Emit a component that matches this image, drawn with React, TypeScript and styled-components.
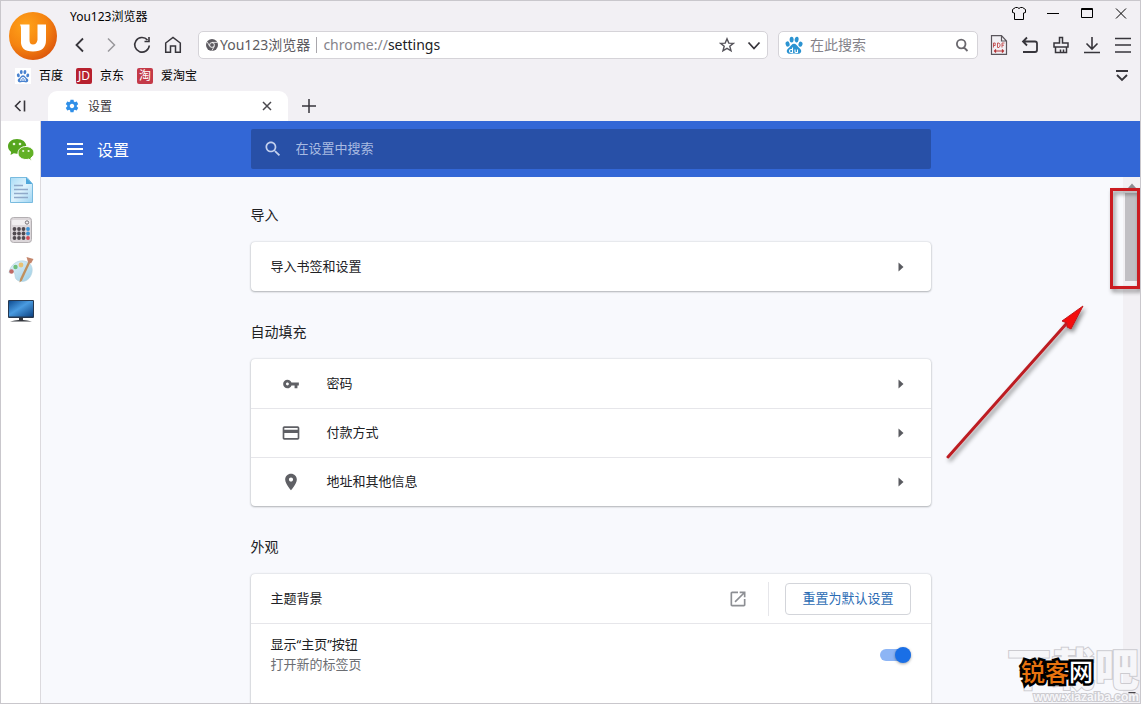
import React from "react";
import styled, { createGlobalStyle } from "styled-components";

const GlobalStyle = createGlobalStyle`
  *, *::before, *::after { box-sizing: border-box; }
  body {
    margin: 0;
    font-family: "Noto Sans", "Noto Sans CJK SC", sans-serif;
    font-size: 13px;
    color: #202124;
  }
  button, input { font: inherit; color: inherit; margin: 0; }
  svg { display: block; flex: none; }
`;

/* ---------- window ---------- */

const Window = styled.div`
  display: flex;
  flex-direction: column;
  height: 100vh;
  border: 1px solid #c9c7cc;
  background: #f2f0f4;
  overflow: hidden;
`;

const IconButton = styled.button<{ $w?: number; $h?: number }>`
  display: flex;
  align-items: center;
  justify-content: center;
  flex: none;
  width: ${(p) => p.$w ?? 24}px;
  height: ${(p) => p.$h ?? 24}px;
  padding: 0;
  border: 0;
  background: none;
  color: #37353b;
`;

const Top = styled.header`
  display: flex;
`;

const Logo = styled.div`
  flex: none;
  padding: 11px 11px 0 8px;
  height: 58px;
`;

const TopColumn = styled.div`
  flex: 1;
  min-width: 0;
`;

const TitleRow = styled.div`
  display: flex;
  height: 30px;
  padding: 0 2px;
`;

const WindowTitle = styled.span`
  flex: 1;
  padding-top: 6px;
  font-size: 12px;
  line-height: 20px;
  color: #000;
`;

const WindowButtons = styled.div`
  display: flex;
`;

const NavRow = styled.div`
  display: flex;
  align-items: center;
  height: 28px;
  padding-right: 5px;
`;

const ButtonGroup = styled.div`
  display: flex;
  gap: 7px;
`;

const Field = styled.div`
  display: flex;
  align-items: center;
  height: 28px;
  border: 1px solid #d5d3d8;
  border-radius: 5px;
  background: #fff;
  font-size: 14px;
  line-height: 20px;
`;

const AddressBar = styled(Field)`
  flex: 1;
  min-width: 0;
  margin: 0 10px 0 13px;
  padding: 0 0 0 7px;
`;

const SearchBar = styled(Field)`
  flex: none;
  width: 200px;
  margin-right: 9px;
  padding: 0 3px 0 6px;
`;

const Identity = styled.span`
  display: flex;
  align-items: center;
  gap: 2px;
  color: #5d5b61;
  white-space: nowrap;
  &::after {
    content: "";
    width: 1px;
    height: 16px;
    margin: 0 6px 0 4px;
    background: #a9a7ac;
  }
`;

const Scheme = styled.label`
  color: #85838a;
`;

const BareInput = styled.input`
  flex: 1;
  min-width: 0;
  padding: 0;
  border: 0;
  outline: 0;
  background: none;
  &::placeholder { color: #85838a; opacity: 1; }
`;

const PaddedInput = styled(BareInput)`
  padding-left: 7px;
`;

const Bookmarks = styled.nav`
  display: flex;
  align-items: center;
  gap: 13px;
  height: 32px;
  padding: 1px 6px 0 14px;
`;

const Bookmark = styled.a`
  display: flex;
  align-items: center;
  gap: 8px;
  font-size: 12px;
  line-height: 20px;
  color: #000;
  text-decoration: none;
`;

const SiteBadge = styled.span<{ $bg: string }>`
  width: 16px;
  height: 16px;
  border-radius: 2px;
  background: ${(p) => p.$bg};
  color: #fff;
  font-size: 12px;
  line-height: 16px;
  text-align: center;
`;

const Spacer = styled.span`
  flex: 1;
`;

const TabStrip = styled.div`
  display: flex;
  align-items: center;
  height: 30px;
  padding-left: 7px;
`;

const Tab = styled.div`
  display: flex;
  align-items: center;
  width: 240px;
  height: 30px;
  margin: 0 9px 0 16px;
  padding: 0 9px 0 17px;
  border-radius: 9px 9px 0 0;
  background: #fff;
  font-size: 12px;
  color: #37353b;
`;

const TabTitle = styled.span`
  flex: 1;
  padding-left: 9px;
`;

/* ---------- page ---------- */

const Body = styled.div`
  display: flex;
  flex: 1;
  min-height: 0;
`;

const SideBar = styled.aside`
  display: flex;
  flex-direction: column;
  align-items: center;
  gap: 12px;
  flex: none;
  width: 40px;
  padding-top: 15px;
  border-right: 1px solid #dcdade;
  background: #fff;
`;

const Page = styled.div`
  position: relative;
  display: flex;
  flex-direction: column;
  flex: 1;
  min-width: 0;
  background: #f8f9fd;
`;

const Toolbar = styled.div`
  display: grid;
  grid-template-columns: 1fr minmax(0, 680px) 1fr;
  align-items: center;
  flex: none;
  height: 56px;
  background: #3367d6;
  color: #fff;
`;

const Brand = styled.div`
  display: flex;
  align-items: center;
  gap: 10px;
  padding: 2px 0 0 22px;
`;

const BrandTitle = styled.h1`
  margin: 0;
  font-size: 16px;
  font-weight: 400;
  line-height: 24px;
`;

const SettingsSearch = styled.label`
  display: flex;
  align-items: center;
  gap: 13px;
  height: 40px;
  padding: 0 12px;
  border-radius: 2px;
  background: #2850a7;
  color: #c3d0ee;
`;

const SettingsInput = styled(BareInput)`
  padding-bottom: 2px;
  &::placeholder { color: #a9bbe2; }
`;

const Scroller = styled.div`
  display: flex;
  flex: 1;
  min-height: 0;
`;

const Content = styled.main`
  display: flex;
  flex-direction: column;
  align-items: center;
  gap: 32px;
  flex: 1;
  min-width: 0;
  padding: 29px 0 0 17px;
  overflow: hidden;
`;

const ScrollTrack = styled.div`
  display: flex;
  flex-direction: column;
  align-items: center;
  justify-content: space-between;
  flex: none;
  width: 17px;
  padding: 6px 0;
  background: #f2f0f4;
`;

const ScrollThumb = styled.div`
  flex: none;
  width: 13px;
  height: 88px;
  margin: 5px 0 auto;
  background: #c1bfc4;
`;

const Section = styled.section`
  flex: none;
  width: 100%;
  max-width: 680px;
`;

const SectionTitle = styled.h2`
  margin: 0 0 18px;
  font-size: 14px;
  font-weight: 400;
  line-height: 18px;
`;

const Card = styled.div`
  border-radius: 4px;
  background: #fff;
  box-shadow: 0 1px 2px rgba(60, 64, 67, 0.32), 0 0 2px rgba(60, 64, 67, 0.25);
`;

const Row = styled.div`
  display: flex;
  align-items: center;
  height: 49px;
  padding: 0 20px;
  line-height: 20px;
  & + & { border-top: 1px solid #e6e6ea; }
`;

const ToggleRow = styled(Row)`
  align-items: flex-start;
  height: 112px;
  padding-top: 10px;
`;

const LinkRow = styled(Row).attrs({ as: "a", href: "#" })`
  color: inherit;
  text-decoration: none;
`;

const RowIcon = styled.span`
  display: flex;
  justify-content: center;
  width: 40px;
  margin-right: 16px;
  color: #5f6065;
`;

const RowText = styled.label`
  flex: 1;
  padding-bottom: 2px;
`;

const SubText = styled.span`
  display: block;
  color: #6b6d72;
`;

const Arrow = styled.span`
  display: flex;
  justify-content: center;
  width: 20px;
  color: #5a5b60;
`;

const Divider = styled.span`
  width: 1px;
  height: 34px;
  margin: 0 16px 0 18px;
  background: #e6e6ea;
`;

const OutlineButton = styled.button`
  height: 32px;
  padding: 0 16px 2px;
  border: 1px solid #d3d5da;
  border-radius: 4px;
  background: #fff;
  color: #2b6cb4;
  line-height: 20px;
  white-space: nowrap;
`;

const Toggle = styled.input`
  appearance: none;
  display: flex;
  align-items: center;
  justify-content: flex-end;
  width: 31px;
  height: 12px;
  margin: 15px 0 0;
  border-radius: 6px;
  background: #8db5f5;
  &::after {
    content: "";
    width: 16px;
    height: 16px;
    border-radius: 50%;
    background: #1a6fe6;
    box-shadow: 0 1px 3px rgba(0, 0, 0, 0.35);
  }
`;

const Muted = styled.span`
  color: #8d8f94;
`;

const Blue = styled.span`
  color: #2f8fe8;
`;

/* ---------- overlays ---------- */

const Annotation = styled.svg`
  position: absolute;
  top: 56px;
  right: 0;
  overflow: visible;
  pointer-events: none;
`;

const Watermark = styled.div`
  position: absolute;
  right: 1px;
  bottom: 0;
  text-align: right;
  white-space: nowrap;
  pointer-events: none;
  font-weight: 900;
  color: #f6f6f9;
  -webkit-text-stroke: 2px #cccbd0;
  paint-order: stroke fill;
`;

const WatermarkName = styled.div`
  font-size: 44px;
  line-height: 44px;
`;

const WatermarkUrl = styled.div`
  font-family: "Liberation Sans", sans-serif;
  font-size: 12px;
  line-height: 12px;
`;

const Stamp = styled.div`
  position: absolute;
  right: 47px;
  bottom: 17px;
  font-size: 24px;
  font-weight: 500;
  line-height: 28px;
  color: #e8730f;
  -webkit-text-stroke: 5px #000;
  paint-order: stroke fill;
  pointer-events: none;
`;

const StampTail = styled.span`
  color: #fff;
`;

/* ---------- drawings ---------- */

type LineProps = { d: string; size?: number; w?: number; color?: string };
const Line = ({ d, size = 20, w = 1.8, color = "currentColor" }: LineProps) => (
  <svg width={size} height={size} viewBox={`0 0 ${size} ${size}`} fill="none" stroke={color} strokeWidth={w}>
    <path d={d} />
  </svg>
);

const Solid = ({ d, size = 20, box = "0 0 24 24" }: { d: string; size?: number; box?: string }) => (
  <svg width={size} height={size} viewBox={box} fill="currentColor">
    <path d={d} />
  </svg>
);

const ChevronRight = () => (
  <Arrow>
    <svg width="6" height="10" viewBox="0 0 6 10" fill="currentColor">
      <path d="M0.500 0.500 5.500 5 0.500 9.500z" />
    </svg>
  </Arrow>
);

const BrowserLogo = () => (
  <svg width="48" height="48" viewBox="0 0 48 48">
    <defs>
      <radialGradient id="logo" cx="0.35" cy="0.3" r="0.8">
        <stop offset="0" stopColor="#ffa31a" />
        <stop offset="0.55" stopColor="#f58410" />
        <stop offset="1" stopColor="#d9500c" />
      </radialGradient>
    </defs>
    <circle cx="24" cy="24" r="24" fill="url(#logo)" />
    <path d="M11 12.500H20.500V28Q20.500 32.500 24 32.500T28.500 28V12.500H37V28Q37 39.500 24 39.500T12 28V16Q12 14 11 12.500Z" fill="#fff" />
  </svg>
);

const PAW_TOES = (
  <>
    <ellipse cx="2.600" cy="8" rx="2" ry="2.700" transform="rotate(-15 2.600 8)" />
    <ellipse cx="6.600" cy="3.600" rx="2" ry="2.900" />
    <ellipse cx="11.600" cy="3.600" rx="2" ry="2.900" transform="rotate(10 11.600 3.600)" />
    <ellipse cx="15.500" cy="8.200" rx="2" ry="2.600" transform="rotate(15 15.500 8.200)" />
  </>
);
const PAW_PAD =
  "M9 7.800c2.200 0 3 2 4.500 3.500 1.500 1.400 3 2.200 2.700 4.200-.4 2.300-2.700 2.500-4.200 2.200-2-.4-4-.4-6 0-1.700.3-3.900 0-4.200-2.200-.3-2 1.200-2.800 2.700-4.200C6 9.800 6.800 7.800 9 7.800z";

const SearchPaw = () => (
  <svg width="18" height="18" viewBox="0 0 18 18" fill="#2b93d1">
    {PAW_TOES}
    <path d={PAW_PAD} />
    <path d="M7.500 11.500v5H6a1.500 1.500 0 0 1 0-3h1.500M10 13.500v2q0 1 1 1h1.500v-3" fill="none" stroke="#fff" strokeWidth="1.100" />
  </svg>
);

const BookmarkPaw = () => (
  <svg width="16" height="16" viewBox="-2 -2 22 22" fill="#4a83d0">
    <path d="M-2-2H20V20H-2z" fill="#fff" />
    {PAW_TOES}
    <path d={PAW_PAD} />
    <path d="M6 16V14Q6 12 9 11 12 12 12 14V16M9 13V16" fill="none" stroke="#fff" strokeWidth="1.500" />
  </svg>
);

const ChromeMark = () => (
  <svg width="12" height="12" viewBox="0 0 12 12">
    <circle cx="6" cy="6" r="6" fill="#5d5b61" />
    <circle cx="6" cy="6" r="2.400" fill="#5d5b61" stroke="#fff" strokeWidth="0.900" />
    <path d="M6 3.400H11.300M3.700 7.300 1.300 3M8.300 7.300 5.800 11.800" stroke="#fff" strokeWidth="0.800" />
  </svg>
);

const PdfIcon = () => (
  <svg width="18" height="20" viewBox="0 0 18 20" fill="none">
    <path d="M1.500 0.700H11.500L16.500 6V19.300H1.500Z M11.500 1V6H16.500" stroke="#5a555b" strokeWidth="1.200" />
    <path d="M3.500 12.500V8H5.200V10.500H3.500M7.500 8H9L10 9.500V11L9 12.500H7.500ZM12 12.500V8H14.500M12 10.200H14" stroke="#c1484a" strokeWidth="0.900" />
    <path d="M4.500 16H13.500M6 14.500 4.500 16 6 17.500M12 14.500 13.500 16 12 17.500" stroke="#b33336" strokeWidth="1.200" />
  </svg>
);

const SEARCH =
  "M15.500 14h-.79l-.28-.27C15.410 12.590 16 11.110 16 9.500 16 5.910 13.090 3 9.500 3S3 5.910 3 9.500 5.910 16 9.500 16c1.610 0 3.090-.59 4.230-1.570l.27.28v.79l5 4.990L20.490 19l-4.990-5zm-6 0C7.010 14 5 11.990 5 9.500S7.010 5 9.500 5 14 7.010 14 9.500 11.990 14 9.500 14z";
const KEY =
  "M12.650 10C11.830 7.670 9.610 6 7 6c-3.310 0-6 2.690-6 6s2.690 6 6 6c2.610 0 4.830-1.670 5.650-4H17v4h4v-4h2v-4H12.650zM7 14c-1.100 0-2-.9-2-2s.9-2 2-2 2 .9 2 2-.9 2-2 2z";
const CARD =
  "M20 4H4c-1.110 0-1.990.89-1.990 2L2 18c0 1.110.89 2 2 2h16c1.110 0 2-.89 2-2V6c0-1.110-.89-2-2-2zm0 14H4v-6h16v6zm0-10H4V6h16v2z";
const PIN =
  "M12 2C8.130 2 5 5.130 5 9c0 5.250 7 13 7 13s7-7.750 7-13c0-3.870-3.130-7-7-7zm0 9.500c-1.380 0-2.500-1.120-2.500-2.500s1.120-2.500 2.500-2.500 2.500 1.120 2.500 2.500-1.120 2.500-2.500 2.500z";
const LAUNCH =
  "M19 19H5V5h7V3H5c-1.110 0-2 .9-2 2v14c0 1.100.89 2 2 2h14c1.100 0 2-.9 2-2v-7h-2v7zM14 3v2h3.590l-9.830 9.830 1.410 1.410L19 6.410V10h2V3h-7z";
const GEAR =
  "M19.430 12.980c.04-.32.07-.64.07-.98s-.03-.66-.07-.98l2.110-1.650c.19-.15.24-.42.12-.64l-2-3.460c-.12-.22-.39-.3-.61-.22l-2.490 1c-.52-.4-1.080-.73-1.690-.98l-.38-2.650C14.460 2.180 14.250 2 14 2h-4c-.25 0-.46.18-.49.42l-.38 2.650c-.61.25-1.170.59-1.690.98l-2.490-1c-.23-.09-.49 0-.61.22l-2 3.460c-.13.22-.07.49.12.64l2.110 1.650c-.04.32-.07.65-.07.98s.03.66.07.98l-2.110 1.650c-.19.15-.24.42-.12.64l2 3.460c.12.22.39.3.61.22l2.490-1c.52.4 1.080.73 1.690.98l.38 2.650c.03.24.24.42.49.42h4c.25 0 .46-.18.49-.42l.38-2.650c.61-.25 1.170-.59 1.690-.98l2.490 1c.23.09.49 0 .61-.22l2-3.460c.12-.22.07-.49-.12-.64l-2.110-1.650zM12 15.500c-1.930 0-3.500-1.570-3.500-3.500s1.570-3.500 3.500-3.500 3.500 1.570 3.500 3.500-1.570 3.500-3.500 3.500z";

const WeChat = () => (
  <svg width="28" height="28" viewBox="0 0 28 28">
    <path d="M10 3C4.500 3 1 6.300 1 10.300c0 2.400 1.200 4.300 3.200 5.700L3.500 19l3.300-1.700c1 .3 2 .5 3.200.5 5.300 0 9.300-3.300 9.300-7.500S15.300 3 10 3z" fill="#55a61e" />
    <path d="M19 10.500c-4.600 0-8 2.900-8 6.500s3.400 6.500 8 6.500c.9 0 1.800-.1 2.600-.4l2.900 1.600-.7-2.600c2-1.300 3.200-3 3.200-5.100 0-3.600-3.500-6.500-8-6.500z" fill="#62b126" stroke="#fff" strokeWidth="1" />
    <circle cx="7" cy="8" r="1.300" fill="#e9f7dc" />
    <circle cx="13" cy="8" r="1.300" fill="#e9f7dc" />
    <circle cx="16.200" cy="15" r="1.100" fill="#e9f7dc" />
    <circle cx="21.600" cy="15" r="1.100" fill="#e9f7dc" />
  </svg>
);

const Notes = () => (
  <svg width="28" height="28" viewBox="0 0 28 28">
    <defs>
      <linearGradient id="paper" x1="0" y1="0" x2="1" y2="1">
        <stop offset="0" stopColor="#a9dcf6" />
        <stop offset="0.5" stopColor="#dff3fd" />
        <stop offset="1" stopColor="#9fd4f2" />
      </linearGradient>
    </defs>
    <path d="M3.500 1.500H20L25.500 8V26.500H3.500Z" fill="url(#paper)" stroke="#79bbdf" />
    <path d="M19 1.500 25.500 8H19Z" fill="#4ea8dc" />
    <path d="M7 9.500H16M7 13.500H21M7 17.500H21M7 21.500H21" stroke="#8fa9c9" strokeWidth="1.300" />
  </svg>
);

const Calculator = () => (
  <svg width="28" height="28" viewBox="0 0 28 28">
    <rect x="3.500" y="1.500" width="21" height="25" rx="3" fill="#dcd7da" stroke="#b3afb2" />
    <rect x="5" y="4" width="18" height="5" rx="1" fill="#f1eff0" />
    <circle cx="20" cy="6.500" r="1.700" fill="none" stroke="#6a666b" strokeWidth="0.900" />
    {[13, 17.5, 22].map((y) =>
      [7.5, 12, 16.5, 21].map((x) => (
        <circle key={`${x}-${y}`} cx={x} cy={y} r="1.900" fill={x === 21 ? (y === 22 ? "#d24a55" : "#3d95d6") : "#514b50"} />
      ))
    )}
  </svg>
);

const Palette = () => (
  <svg width="28" height="28" viewBox="0 0 28 28">
    <defs>
      <linearGradient id="board" x1="0" y1="0" x2="1" y2="1">
        <stop offset="0" stopColor="#e6f3f9" />
        <stop offset="1" stopColor="#9ccfe6" />
      </linearGradient>
    </defs>
    <path d="M17 5C10 4 3 9 2 17c3-2 6-1 6 2s1 5 4 6c7 2 12-3 13-9C26 10 23 6 17 5z" fill="url(#board)" stroke="#b4d3e0" strokeWidth="0.700" />
    <circle cx="4.500" cy="15.500" r="2.200" fill="#c06a66" />
    <circle cx="8.500" cy="11" r="2.200" fill="#6fbf7e" />
    <circle cx="14" cy="9" r="2.400" fill="#e8c274" />
    <path d="M24 5 15 24.500 12.500 26.500 13 23 22 4Z" fill="#c0905c" />
    <path d="M19.500 1 26.500 3 24 7.500 21 6Z" fill="#c4866c" />
  </svg>
);

const Monitor = () => (
  <svg width="28" height="28" viewBox="0 0 28 28">
    <defs>
      <linearGradient id="screen" x1="0" y1="0" x2="1" y2="1">
        <stop offset="0" stopColor="#0f4d92" />
        <stop offset="0.450" stopColor="#4a9be0" />
        <stop offset="1" stopColor="#0d4384" />
      </linearGradient>
    </defs>
    <rect x="1" y="4" width="26" height="18" rx="1" fill="#27384f" />
    <rect x="2" y="5" width="24" height="15.500" fill="url(#screen)" />
    <path d="M12 22H16V24Q20 24 25 25.500H3Q8 24 12 24Z" fill="#33363d" />
  </svg>
);

const ScrollArrow = ({ up }: { up?: boolean }) => (
  <svg width="8" height="5" viewBox="0 0 8 5" fill={up ? "#8f8d93" : "#47454b"}>
    <path d={up ? "M0 5 4 0.500 8 5z" : "M0 0 4 4.500 8 0z"} />
  </svg>
);

/* ---------- app ---------- */

const autofillRows = [
  { label: "密码", d: KEY, box: "-2 -2 28 28" },
  { label: "付款方式", d: CARD, box: "0 0 24 24" },
  { label: "地址和其他信息", d: PIN, box: "0 0 24 24" },
];

export default function App() {
  return (
    <>
      <GlobalStyle />
      <Window>
        <Top>
          <Logo>
            <BrowserLogo />
          </Logo>
          <TopColumn>
            <TitleRow>
              <WindowTitle>You123浏览器</WindowTitle>
              <WindowButtons>
                <IconButton $w={34} aria-label="皮肤">
                  <Line size={16} w={1} color="#000" d="M4.500 2.500H6.500Q8 4.500 9.500 2.500H11.500L14.500 4.500V7.500L12.500 8V14.500H3.500V8L1.500 7.500V4.500Z" />
                </IconButton>
                <IconButton $w={34} aria-label="最小化">
                  <Line size={16} w={1} color="#000" d="M2 8.500H14" />
                </IconButton>
                <IconButton $w={34} aria-label="最大化">
                  <Line size={16} w={1} color="#000" d="M2.500 3.500H13.500V12.500H2.500ZM2 4.500H14" />
                </IconButton>
                <IconButton $w={34} aria-label="关闭">
                  <Line size={16} w={1} color="#000" d="M3 3.500 13 13.500M13 3.500 3 13.500" />
                </IconButton>
              </WindowButtons>
            </TitleRow>
            <NavRow>
              <ButtonGroup>
                <IconButton aria-label="后退"><Line d="M13 3.500 6.500 10 13 16.500" /></IconButton>
                <IconButton aria-label="前进"><Line color="#99979c" w={1.5} d="M7 3.500 13.500 10 7 16.500" /></IconButton>
                <IconButton aria-label="刷新"><Line w={1.6} d="M15.500 5A7.300 7.300 0 1 0 17.300 10.500M17 2V6.500H12.500" /></IconButton>
                <IconButton aria-label="主页"><Line w={1.5} d="M2.700 17.300V8L10 2.500 17.300 8V17.300H12.500V11H7.500V17.300Z" /></IconButton>
              </ButtonGroup>
              <AddressBar>
                <Identity><ChromeMark />You123浏览器</Identity>
                <Scheme htmlFor="address">chrome://</Scheme>
                <BareInput id="address" defaultValue="settings" />
                <IconButton $w={28} aria-label="收藏">
                  <Line size={16} w={1.4} color="#55535a" d="M8 1.800 9.800 6.100 14.300 6.400 10.800 9.300 12 13.800 8 11.300 4 13.800 5.200 9.300 1.700 6.400 6.200 6.100Z" />
                </IconButton>
                <IconButton $w={26} aria-label="展开"><Line size={16} d="M2.500 5.500 8 11.500 13.500 5.500" /></IconButton>
              </AddressBar>
              <SearchBar>
                <SearchPaw />
                <PaddedInput aria-label="在此搜索" placeholder="在此搜索" />
                <IconButton aria-label="搜索">
                  <Line size={16} color="#6a686e" d="M11.500 7A4.300 4.300 0 1 1 2.900 7 4.300 4.300 0 0 1 11.500 7M10 10.500 13.500 14" />
                </IconButton>
              </SearchBar>
              <ButtonGroup>
                <IconButton aria-label="PDF"><PdfIcon /></IconButton>
                <IconButton aria-label="撤销"><Line d="M7 2.500 3 6.500 7 10.500M3 6.500H15Q17 6.500 17 8.500V15Q17 17 15 17H3" /></IconButton>
                <IconButton aria-label="清理"><Line w={1.5} d="M8.500 2.500H11.500V8H17V12H3V8H8.500ZM4.500 12V17.500H15.500V12M9.500 17V14.500M12.500 17V14.500" /></IconButton>
                <IconButton aria-label="下载"><Line d="M10 2V14M4.500 8.500 10 14 15.500 8.500M2 17.500H18" w={1.6} /></IconButton>
                <IconButton aria-label="菜单"><Line d="M2 3.500H18M2 10H18M2 17H18" w={1.6} /></IconButton>
              </ButtonGroup>
            </NavRow>
          </TopColumn>
        </Top>

        <Bookmarks>
          <Bookmark href="#"><BookmarkPaw />百度</Bookmark>
          <Bookmark href="#"><SiteBadge $bg="#b7202e">JD</SiteBadge>京东</Bookmark>
          <Bookmark href="#"><SiteBadge $bg="#c43a48">淘</SiteBadge>爱淘宝</Bookmark>
          <Spacer />
          <IconButton aria-label="更多书签"><Line size={16} d="M2 3H14M3 7 8 12 13 7" /></IconButton>
        </Bookmarks>

        <TabStrip>
          <IconButton aria-label="收起侧栏"><Line size={16} w={1.6} d="M8.500 3 3.500 8 8.500 13M12.500 2.500V13.500" /></IconButton>
          <Tab>
            <Blue><Solid size={14} box="1 1 22 22" d={GEAR} /></Blue>
            <TabTitle>设置</TabTitle>
            <IconButton aria-label="关闭标签"><Line size={16} w={1.5} color="#4a484e" d="M4 4 12 12M12 4 4 12" /></IconButton>
          </Tab>
          <IconButton aria-label="新标签"><Line size={16} w={1.5} d="M8 1V15M1 8H15" /></IconButton>
        </TabStrip>

        <Body>
          <SideBar>
            <WeChat />
            <Notes />
            <Calculator />
            <Palette />
            <Monitor />
          </SideBar>
          <Page>
            <Toolbar>
              <Brand>
                <IconButton aria-label="主菜单"><Line w={2} color="#fff" d="M2 4H18M2 9H18M2 14H18" /></IconButton>
                <BrandTitle>设置</BrandTitle>
              </Brand>
              <SettingsSearch>
                <Solid d={SEARCH} />
                <SettingsInput aria-label="在设置中搜索" placeholder="在设置中搜索" />
              </SettingsSearch>
            </Toolbar>
            <Scroller>
              <Content>
                <Section>
                  <SectionTitle>导入</SectionTitle>
                  <Card>
                    <LinkRow>
                      <RowText as="span">导入书签和设置</RowText>
                      <ChevronRight />
                    </LinkRow>
                  </Card>
                </Section>
                <Section>
                  <SectionTitle>自动填充</SectionTitle>
                  <Card>
                    {autofillRows.map((r) => (
                      <LinkRow key={r.label}>
                        <RowIcon><Solid d={r.d} box={r.box} /></RowIcon>
                        <RowText as="span">{r.label}</RowText>
                        <ChevronRight />
                      </LinkRow>
                    ))}
                  </Card>
                </Section>
                <Section>
                  <SectionTitle>外观</SectionTitle>
                  <Card>
                    <Row>
                      <RowText as="span">主题背景</RowText>
                      <IconButton aria-label="打开主题背景"><Muted><Solid d={LAUNCH} /></Muted></IconButton>
                      <Divider />
                      <OutlineButton>重置为默认设置</OutlineButton>
                    </Row>
                    <ToggleRow>
                      <RowText htmlFor="home-button">
                        显示“主页”按钮
                        <SubText>打开新的标签页</SubText>
                      </RowText>
                      <Toggle id="home-button" type="checkbox" role="switch" defaultChecked />
                    </ToggleRow>
                  </Card>
                </Section>
              </Content>
              <ScrollTrack>
                <ScrollArrow up />
                <ScrollThumb />
                <ScrollArrow />
              </ScrollTrack>
            </Scroller>

            <Watermark>
              <WatermarkName>下载吧</WatermarkName>
              <WatermarkUrl>www.xiazaiba.com</WatermarkUrl>
            </Watermark>
            <Stamp>锐客<StampTail>网</StampTail></Stamp>
            <Annotation width="200" height="300" viewBox="0 0 200 300">
              <defs>
                <filter id="soft" x="-20%" y="-20%" width="140%" height="140%">
                  <feDropShadow dx="2" dy="3" stdDeviation="2" floodColor="#000" floodOpacity="0.450" />
                </filter>
              </defs>
              <g filter="url(#soft)">
                <rect x="171.500" y="12.500" width="27" height="98" fill="none" stroke="#cb1c20" strokeWidth="3" />
                <path d="M8 280 127 146" stroke="#bd1f24" strokeWidth="3" strokeLinecap="round" />
                <path d="M143 129 122 144 127 146 127 150 131 152Z" fill="#f40d0d" stroke="#c01a1e" strokeWidth="1" />
              </g>
            </Annotation>
          </Page>
        </Body>
      </Window>
    </>
  );
}
